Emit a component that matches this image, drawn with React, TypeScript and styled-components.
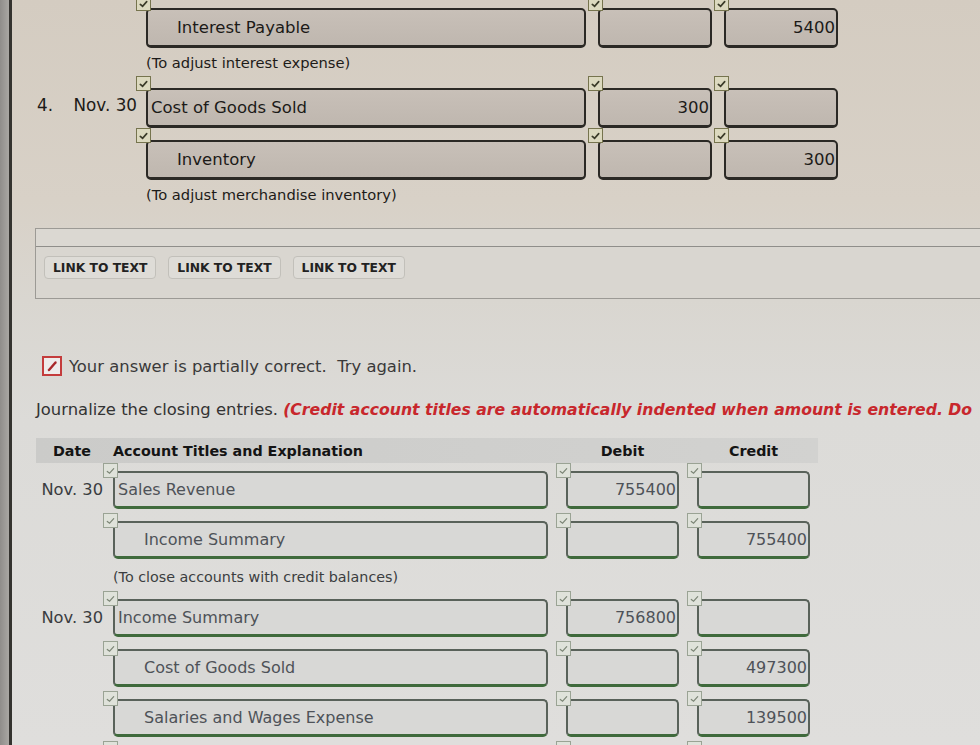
import React from "react";
import styled, { createGlobalStyle, css } from "styled-components";

type Variant = "warm" | "cool";

const Global = createGlobalStyle`
  html, body { margin: 0; padding: 0; }
  body {
    background: #dcdbd8;
    font-family: "DejaVu Sans", Verdana, sans-serif;
    overflow: hidden;
  }
`;

const Page = styled.div`
  display: flex;
  width: 980px;
  height: 745px;
  overflow: hidden;
`;

const Rail = styled.div`
  flex: none;
  width: 9px;
  background: linear-gradient(90deg, #8f8d8a, #a9a7a3);
  border-right: 3px solid #34332f;
`;

const Main = styled.main`
  flex: 1;
  min-width: 0;
  display: flex;
  flex-direction: column;
  overflow: hidden;
  background: linear-gradient(
    180deg,
    #d4ccc1 0px,
    #d8d1c7 200px,
    #d9d6d0 300px,
    #dcdbd8 420px,
    #dfdedc 745px
  );
`;

const TopSection = styled.section`
  flex: none;
  padding-top: 8px;
  height: 228px;
  box-sizing: border-box;
`;

const Row = styled.div<{ $v: Variant; $mt?: number }>`
  flex: none;
  display: grid;
  grid-template-columns: ${(p) =>
    p.$v === "warm" ? "122px 440px 114px 114px" : "83px 435px 113px 113px"};
  column-gap: ${(p) => (p.$v === "warm" ? "12px" : "18px")};
  height: ${(p) => (p.$v === "warm" ? "40px" : "38px")};
  margin-top: ${(p) => p.$mt ?? 0}px;
`;

const DateCell = styled.div<{ $v: Variant }>`
  display: flex;
  align-items: center;
  justify-content: space-between;
  padding: ${(p) => (p.$v === "warm" ? "0 9px 0 25px" : "0 10px 0 20px")};
  margin-right: ${(p) => (p.$v === "warm" ? "-12px" : "-18px")};
  font-size: ${(p) => (p.$v === "warm" ? "16.8px" : "16.3px")};
  white-space: nowrap;
  color: ${(p) => (p.$v === "warm" ? "#1d1b18" : "#3a3c40")};
  margin-top: ${(p) => (p.$v === "warm" ? "-6px" : "-2px")};
`;

const Field = styled.div<{ $v: Variant; $indent?: boolean; $num?: boolean }>`
  position: relative;
  box-sizing: border-box;
  height: 100%;
  display: flex;
  align-items: center;
  justify-content: ${(p) => (p.$num ? "flex-end" : "flex-start")};
  padding: ${(p) =>
    p.$num ? "0 1px 0 0" : p.$indent ? "0 0 0 29px" : "0 0 0 3px"};
  border-radius: 5px;
  white-space: nowrap;
  ${(p) =>
    p.$v === "warm"
      ? css`
          font-size: 16.5px;
          background: linear-gradient(180deg, #c8c0b8, #bfb7af);
          border: 2px solid #2b2925;
          border-bottom-width: 3px;
          color: #1c1a18;
        `
      : css`
          font-size: 16px;
          background: #d8d8d6;
          border: 2px solid #59625a;
          border-bottom: 3px solid #3f6a3c;
          color: #4e5258;
        `}
`;

const Check = styled.span<{ $v: Variant }>`
  position: absolute;
  left: -12px;
  top: ${(p) => (p.$v === "warm" ? "-14px" : "-10px")};
  width: 15px;
  height: 15px;
  box-sizing: border-box;
  border: 1px solid ${(p) => (p.$v === "warm" ? "#76744e" : "#9aa394")};
  background: ${(p) => (p.$v === "warm" ? "#dcd9bf" : "#dfe2da")};
  display: flex;
  align-items: center;
  justify-content: center;
  svg {
    width: 11px;
    height: 11px;
  }
`;

const Expl = styled.div<{ $v: Variant; $h: number }>`
  flex: none;
  height: ${(p) => p.$h}px;
  box-sizing: border-box;
  padding-top: ${(p) => (p.$v === "warm" ? 5 : 8)}px;
  padding-left: ${(p) => (p.$v === "warm" ? 134 : 101)}px;
  line-height: 20px;
  font-size: ${(p) => (p.$v === "warm" ? "14.7px" : "14.3px")};
  white-space: nowrap;
  color: ${(p) => (p.$v === "warm" ? "#1d1b18" : "#3b3d40")};
`;

const LinkPanel = styled.section`
  flex: none;
  margin-left: 23px;
  margin-right: -10px;
  height: 71px;
  box-sizing: border-box;
  border: 1px solid #9c9a95;
  background: #d9d6d0;
  display: flex;
  flex-direction: column;
`;

const PanelHead = styled.div`
  height: 17px;
  border-bottom: 1px solid #8f8e8a;
  background: #dbd8d2;
`;

const PanelBody = styled.div`
  display: flex;
  gap: 12px;
  padding: 9px 0 0 8px;
`;

const LinkButton = styled.button`
  height: 23px;
  padding: 0 8px;
  border: 1px solid #c2c0ba;
  border-radius: 4px;
  background: #dedcd7;
  font-family: "DejaVu Sans", Verdana, sans-serif;
  font-weight: bold;
  font-size: 12.3px;
  color: #222;
`;

const Feedback = styled.div`
  flex: none;
  display: flex;
  align-items: center;
  gap: 7px;
  margin: 56px 0 0 30px;
  height: 22px;
  font-size: 16.4px;
  white-space: nowrap;
  color: #3a3a3a;
`;

const PencilBox = styled.span`
  flex: none;
  width: 20px;
  height: 20px;
  box-sizing: border-box;
  border: 2px solid #c43c3c;
  background: #eeeceb;
  display: flex;
  align-items: center;
  justify-content: center;
`;

const Instructions = styled.p`
  flex: none;
  margin: 23px 0 0 24px;
  line-height: 20px;
  font-size: 16.4px;
  color: #333;
  white-space: nowrap;
`;

const Hint = styled.span`
  color: #c8272c;
  font-style: italic;
  font-weight: bold;
  font-size: 15.7px;
`;

const HeaderBar = styled.div`
  flex: none;
  margin: 18px 0 0 24px;
  width: 782px;
  height: 25px;
  display: grid;
  grid-template-columns: 59px 435px 113px 113px;
  column-gap: 18px;
  align-items: center;
  background: linear-gradient(90deg, #cbcbc9, #d2d2d0);
  font-weight: bold;
  font-size: 14.3px;
  color: #141414;
`;

const HeadCell = styled.div<{ $center?: boolean }>`
  text-align: ${(p) => (p.$center ? "center" : "left")};
  white-space: nowrap;
`;

const DateHead = styled(HeadCell)`
  padding-left: 17px;
`;

const Tick = ({ v }: { v: Variant }) => (
  <svg viewBox="0 0 12 12">
    <polyline
      points="2.5,7 5,9 9.5,4"
      fill="none"
      stroke={v === "warm" ? "#3a3a28" : "#7c8676"}
      strokeWidth={v === "warm" ? 1.8 : 1.3}
      strokeLinecap="round"
    />
  </svg>
);

type Entry = {
  num?: string;
  date?: string;
  acct: string;
  indent?: boolean;
  debit?: string;
  credit?: string;
};

const EntryRow = ({ v, e, mt }: { v: Variant; e: Entry; mt?: number }) => (
  <Row $v={v} $mt={mt}>
    <DateCell $v={v}>
      <span>{e.num ?? ""}</span>
      <span>{e.date ?? ""}</span>
    </DateCell>
    <Field $v={v} $indent={e.indent}>
      <Check $v={v}>
        <Tick v={v} />
      </Check>
      {e.acct}
    </Field>
    <Field $v={v} $num>
      <Check $v={v}>
        <Tick v={v} />
      </Check>
      {e.debit ?? ""}
    </Field>
    <Field $v={v} $num>
      <Check $v={v}>
        <Tick v={v} />
      </Check>
      {e.credit ?? ""}
    </Field>
  </Row>
);

export default function App() {
  return (
    <>
      <Global />
      <Page>
        <Rail />
        <Main>
          <TopSection>
            <EntryRow v="warm" e={{ acct: "Interest Payable", indent: true, credit: "5400" }} />
            <Expl $v="warm" $h={40}>(To adjust interest expense)</Expl>
            <EntryRow
              v="warm"
              e={{ num: "4.", date: "Nov. 30", acct: "Cost of Goods Sold", debit: "300" }}
            />
            <EntryRow v="warm" mt={12} e={{ acct: "Inventory", indent: true, credit: "300" }} />
            <Expl $v="warm" $h={40}>(To adjust merchandise inventory)</Expl>
          </TopSection>

          <LinkPanel>
            <PanelHead />
            <PanelBody>
              <LinkButton>LINK TO TEXT</LinkButton>
              <LinkButton>LINK TO TEXT</LinkButton>
              <LinkButton>LINK TO TEXT</LinkButton>
            </PanelBody>
          </LinkPanel>

          <Feedback>
            <PencilBox>
              <svg width="14" height="14" viewBox="0 0 14 14">
                <line x1="4" y1="11" x2="10.5" y2="3.5" stroke="#a8282a" strokeWidth="2.4" strokeLinecap="round" />
              </svg>
            </PencilBox>
            <span>Your answer is partially correct.&nbsp; Try again.</span>
          </Feedback>

          <Instructions>
            Journalize the closing entries.{" "}
            <Hint>
              (Credit account titles are automatically indented when amount is entered. Do
            </Hint>
          </Instructions>

          <HeaderBar>
            <DateHead>Date</DateHead>
            <HeadCell>Account Titles and Explanation</HeadCell>
            <HeadCell $center>Debit</HeadCell>
            <HeadCell $center>Credit</HeadCell>
          </HeaderBar>

          <EntryRow v="cool" mt={8} e={{ date: "Nov. 30", acct: "Sales Revenue", debit: "755400" }} />
          <EntryRow v="cool" mt={12} e={{ acct: "Income Summary", indent: true, credit: "755400" }} />
          <Expl $v="cool" $h={40}>(To close accounts with credit balances)</Expl>
          <EntryRow v="cool" e={{ date: "Nov. 30", acct: "Income Summary", debit: "756800" }} />
          <EntryRow v="cool" mt={12} e={{ acct: "Cost of Goods Sold", indent: true, credit: "497300" }} />
          <EntryRow v="cool" mt={12} e={{ acct: "Salaries and Wages Expense", indent: true, credit: "139500" }} />
          <EntryRow v="cool" mt={12} e={{ acct: "", indent: true }} />
        </Main>
      </Page>
    </>
  );
}
